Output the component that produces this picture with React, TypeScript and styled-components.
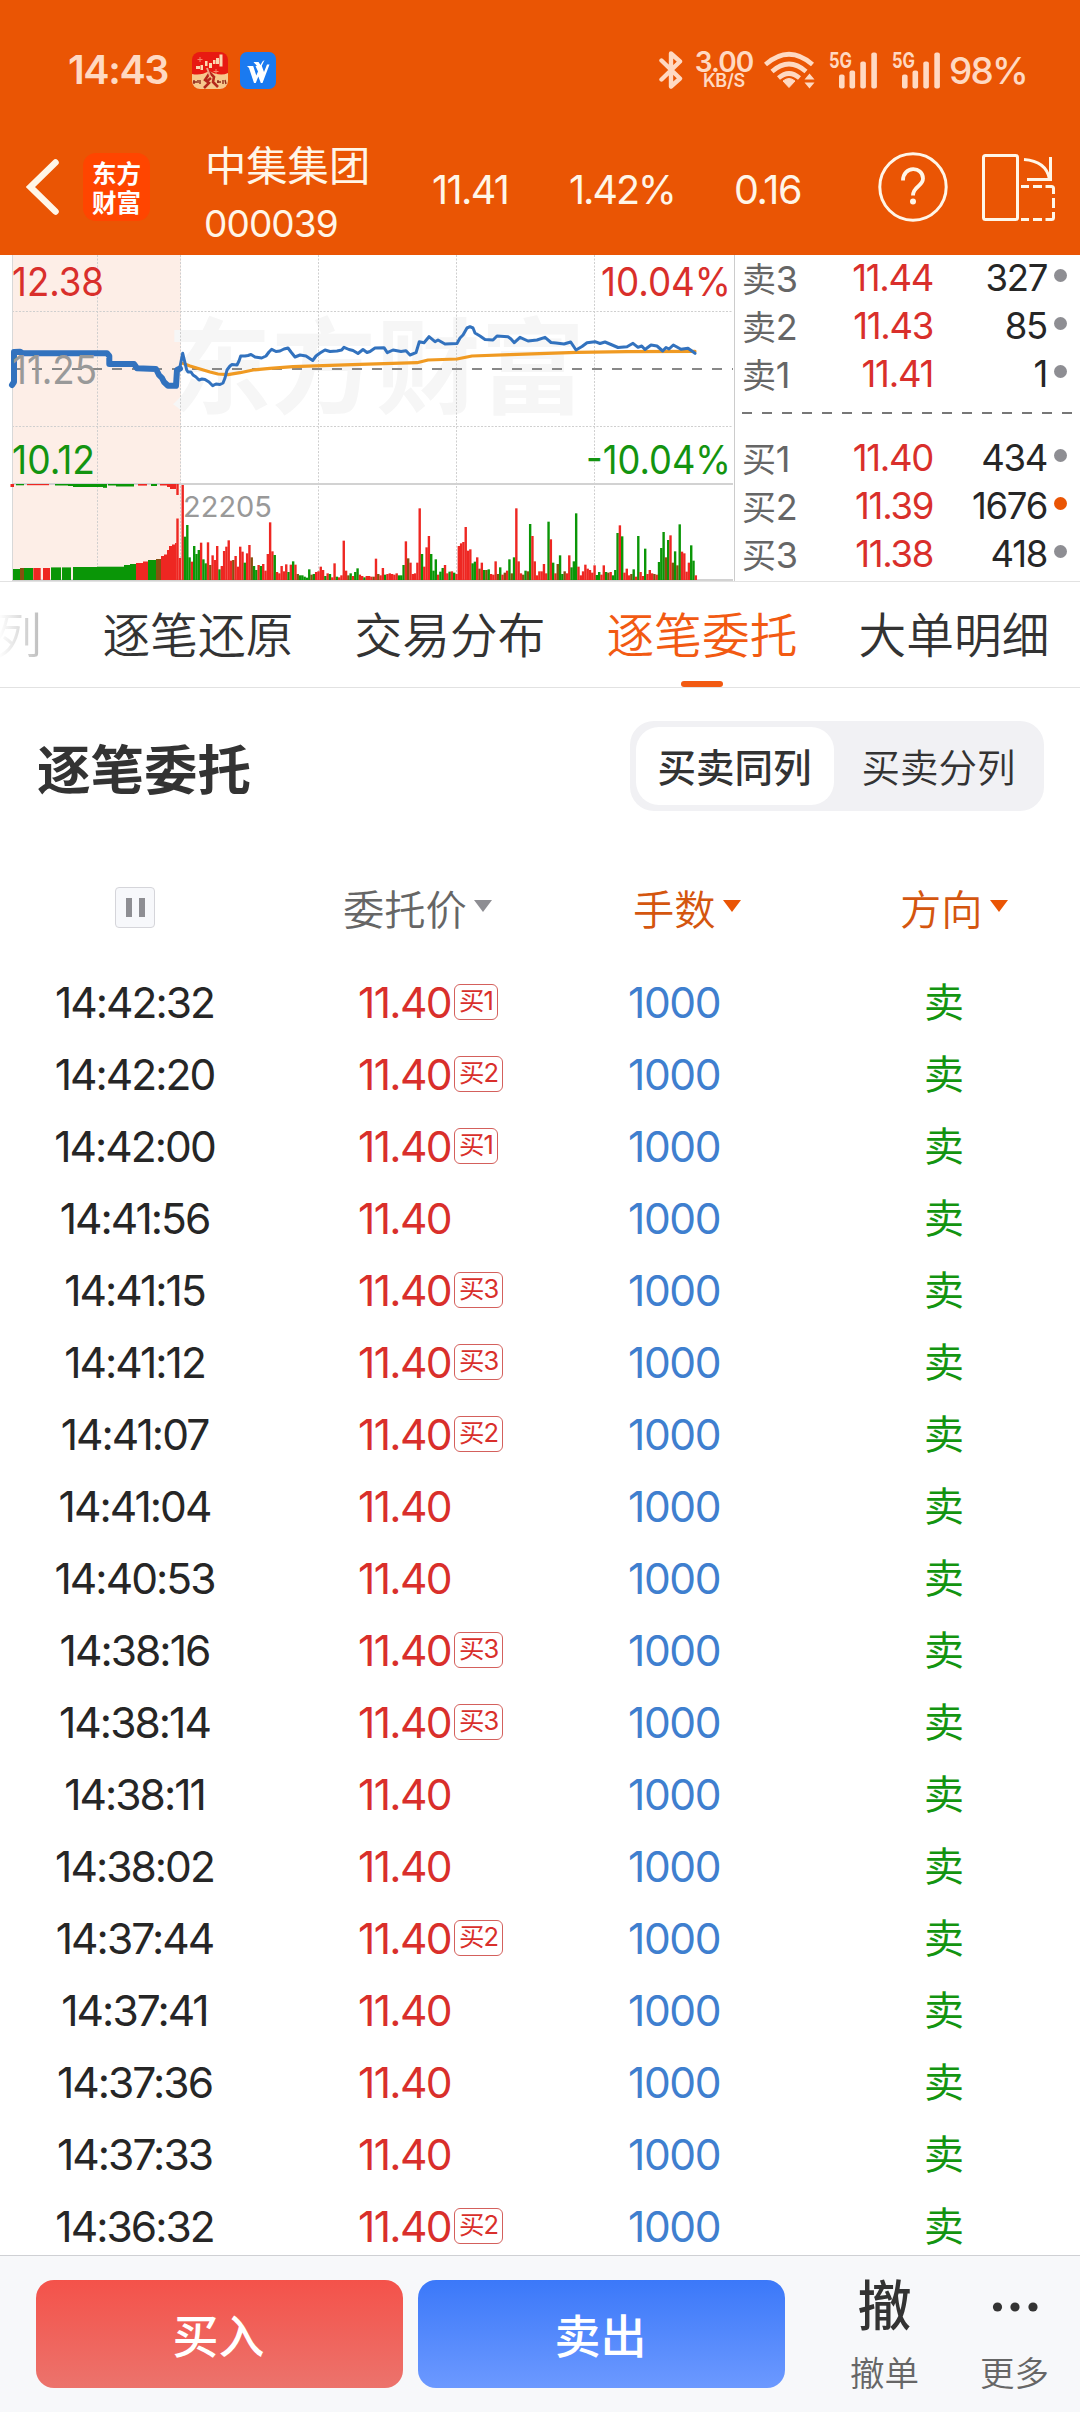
import React from "react";
import styled, { createGlobalStyle, css } from "styled-components";

const Global = createGlobalStyle`
  * { box-sizing: border-box; }
  body {
    margin: 0;
    background: #fff;
    font-family: Inter, "Noto Sans CJK SC", sans-serif;
  }
`;

const ORANGE = "#ea5504";
const RED = "#d92f2b";
const GREEN = "#139410";

/* ---------- data ---------- */

type Order = { time: string; tag?: string };

const orders: Order[] = [
  { time: "14:42:32", tag: "买1" },
  { time: "14:42:20", tag: "买2" },
  { time: "14:42:00", tag: "买1" },
  { time: "14:41:56" },
  { time: "14:41:15", tag: "买3" },
  { time: "14:41:12", tag: "买3" },
  { time: "14:41:07", tag: "买2" },
  { time: "14:41:04" },
  { time: "14:40:53" },
  { time: "14:38:16", tag: "买3" },
  { time: "14:38:14", tag: "买3" },
  { time: "14:38:11" },
  { time: "14:38:02" },
  { time: "14:37:44", tag: "买2" },
  { time: "14:37:41" },
  { time: "14:37:36" },
  { time: "14:37:33" },
  { time: "14:36:32", tag: "买2" },
];

type Quote = { label: string; price: string; volume: string; hot?: boolean };

const asks: Quote[] = [
  { label: "卖3", price: "11.44", volume: "327" },
  { label: "卖2", price: "11.43", volume: "85" },
  { label: "卖1", price: "11.41", volume: "1" },
];

const bids: Quote[] = [
  { label: "买1", price: "11.40", volume: "434" },
  { label: "买2", price: "11.39", volume: "1676", hot: true },
  { label: "买3", price: "11.38", volume: "418" },
];

/* One entry per minute: direction letter followed by the height in thirds of a pixel. */
const volumes = (
  "r285 g130 g165 g68 r55 g102 g78 g90 r112 g62 g50 r113 o45 r74 r60 r102 g32 r42 r87 r100 r119 r58 o60 r72 r40 r100 r85 g52 r80 r105 " +
  "o68 g42 g30 r45 g42 r48 r28 r78 r173 r86 g75 r24 r20 r42 r26 r47 g24 r46 g56 r46 o18 g14 g14 g10 g7 g32 o16 g18 r24 r26 " +
  "r40 r30 g12 r20 g18 r8 r50 g10 r8 r14 r118 r28 o14 g20 r12 g24 g35 r16 r12 g8 r12 r12 r10 o10 r64 o18 r14 r36 g16 r18 " +
  "r20 r18 r16 r20 g14 g14 g45 r116 o65 r52 r18 r20 r52 r215 g78 r40 r98 r132 g78 g28 g62 r16 g25 g36 r45 r20 g25 r26 g22 r18 " +
  "r102 r110 r114 r159 r88 r92 g50 g55 r68 o34 r52 g30 o30 g32 r18 r16 r56 o18 g38 r16 o22 r28 g62 o20 g68 r215 r56 r20 o16 g28 " +
  "o26 g168 r132 r56 r14 r26 r26 r48 r20 g175 r122 g52 r20 o48 g74 g18 o26 r20 r74 g38 g56 g200 r40 r14 r26 r46 r34 r30 r22 r44 " +
  "g15 g24 r16 r44 g24 o22 r24 g14 g30 g141 r164 g131 r22 r34 r14 o18 g32 r10 g132 r24 r12 g94 r18 r30 r20 o18 r16 g54 g96 g144 " +
  "o68 g120 r134 o52 g86 o44 g167 r85 r80 r25 r52 g104 g58 r14"
).split(" ");

const barColor: Record<string, string> = { r: "#ee2722", g: "#0a9607", o: "#86500f" };

/* Pre-open auction blocks: x, width, height, direction. */
const auction: [number, number, number, string][] = [
  [13, 7, 11, "g"], [20, 4, 12, "o"], [24, 9, 12, "g"], [33.3, 7.4, 12, "r"], [43, 7, 12, "r"],
  [51, 10, 12.6, "g"], [62, 9, 12.6, "g"], [73, 24, 13, "g"], [97, 27, 13.3, "g"], [124, 6, 15, "g"],
  [130, 6, 16, "g"], [136, 7, 17, "r"], [143, 5, 18.5, "r"], [148, 8, 20, "g"], [156, 5, 21, "o"],
  [161, 3, 24, "r"], [164, 3, 25.5, "r"], [167, 2, 30, "r"], [169, 3, 34, "r"], [172, 3, 35.5, "r"],
  [175, 1.6, 37, "r"], [176.3, 2.4, 61.5, "r"], [178.7, 2.4, 22, "r"],
];

const unmatched: [number, number, number, string][] = [
  [10.5, 3.5, 3, "r"], [16, 8, 1.3, "g"], [27, 22, 1.2, "r"], [55, 13, 1.5, "g"], [68, 5, 2, "g"],
  [73, 30, 3, "g"], [103, 4, 3.8, "g"], [108, 8, 1.5, "g"], [116, 18, 2.5, "g"], [138, 9, 1.6, "r"],
  [151, 6, 2, "g"], [160, 7, 1.5, "r"], [167, 3, 3, "r"], [170, 6, 5, "r"], [176.3, 2.4, 11, "r"],
];

const priceLine =
  "180,366.7 182.7,353.3 186.7,370 188,372 191,372 193,375 196,377 199,380 202,379 205,379.5 209,382 212.7,385.7 216,384 220,384.5 223,383 225,378 227,370 230,366 232,364.5 237,365 239,361 240.7,356 245,356 248,355.5 251,354.5 255,357 261.7,358 266,356 269,352 271.7,349.3 276,351.5 280,351 284,349 288,348 291,352 295,357 300,355 306,356 312.7,360.5 316,356 320,353 325,350 330,351.5 337,351 341.7,350 344,347.3 349,349.5 353,350.5 358,353.5 363,349.5 367,352.5 370,351.5 375,348 384,347.7 387.3,352.7 393,350 401,351.5 406,350.7 410,355 416,352.7 419.3,341.7 424,342.7 429,336.7 435,341.7 438,340 445,344 457,343.5 460,338 463,335 467,328 470,326.7 473,328 475,333 480,336 485,339.5 493,340 497,336 508,336.7 511,339 514.3,342.7 520,337.3 528,341 537,340 545,337.3 551,342.5 556,343 564,344 570.7,342 576,350 582,346.5 587,342.7 595,341.7 600,343.5 605,342 611,344.5 618,347.5 627,346.7 633,343.3 638,347.3 641.7,346 645,349.5 651,345 657,346 662.7,351 666,347.5 669,349 673.3,345 681,349.3 688,348.3 695,353.3";

const averageLine =
  "182.7,363.3 190,366 200,369 210,372 218,374 228,374.7 240,372.7 253,370 270,368.3 293,366.7 360,364.4 417,362.7 428,360 457,359 472,356 510,354.7 547,353.3 577,352.3 627,351.7 695,351.3";

const auctionLine =
  "12,385 14,382 14,352 20,351.7 23,353.3 107,353.3 109.3,356 109.3,364 134,364 137,368.3 156,369 159,375 162,378 164,382 168,385.7 176,385.7 177,370 180,368.5";

/* ---------- status bar ---------- */

const Screen = styled.div`
  width: 1080px;
  height: 2412px;
  display: flex;
  flex-direction: column;
  overflow: hidden;
  background: #fff;
  color: #262626;
  white-space: nowrap;
`;

const Head = styled.header`
  height: 255px;
  flex: none;
  background: ${ORANGE};
  color: #fff6e8;
  display: flex;
  flex-direction: column;
`;

const StatusBar = styled.div`
  height: 138px;
  flex: none;
  padding: 2px 54px 0 68px;
  display: flex;
  align-items: center;
  color: #ffd9c2;
`;

const Clock = styled.span`
  width: 124px;
  font-size: 39.5px;
  font-weight: 600;
  letter-spacing: -1.4px;
`;

const Tray = styled.div`
  display: flex;
  gap: 12px;
  flex: 1;
`;

const NetSpeed = styled.div`
  width: 60px;
  margin: 0 10px 0 11px;
  display: flex;
  flex-direction: column;
  align-items: center;
  font-weight: 600;
  font-size: 28px;
  line-height: 22px;
  letter-spacing: -0.9px;
  small {
    font-size: 18px;
    line-height: 16px;
    letter-spacing: -0.2px;
  }
`;

const Signals = styled.div`
  display: flex;
  gap: 14px;
  margin: 0 8px 0 13px;
  svg { overflow: visible; }
`;

const Battery = styled.span`
  width: 77px;
  font-size: 37px;
  font-weight: 500;
  letter-spacing: -1.8px;
`;

const Bluetooth = () => (
  <svg width="24" height="40" viewBox="0 0 24 40" fill="none" stroke="#ffd9c2" strokeWidth="4.4" strokeLinejoin="round" strokeLinecap="round">
    <path d="M2.5 10.5 21 28.500 12 36.500V3.500L21 11.500 2.500 29.500" />
  </svg>
);

const Wifi = () => (
  <svg width="52" height="40" viewBox="0 0 52 40">
    <g fill="none" stroke="#ffd9c2" strokeWidth="4.600">
      <path d="M1.500 14.500Q25 -6 48.500 14.500" />
      <path d="M8 21.500Q25 6.500 42 21.500" />
      <path d="M14.500 28Q25 19 35.500 28" />
    </g>
    <path d="M19 31Q25 26 31 31L25 37.500Z" fill="#ffd9c2" stroke="#ffd9c2" strokeWidth="1" />
    <path d="M40.500 29.500 45.500 23.500 50.500 29.500ZM40.500 32.500H50.500L45.500 38.500Z" fill="#ffd9c2" />
  </svg>
);

const Signal = () => (
  <svg width="49" height="40" viewBox="0 0 49 40" fill="#ffd9c2">
    <text x="0" y="17.500" fontSize="21" fontWeight="700" textLength="23" lengthAdjust="spacingAndGlyphs">5G</text>
    <rect x="10" y="24.500" width="5.600" height="14" rx="2" />
    <rect x="20.500" y="20.500" width="5.600" height="18" rx="2" />
    <rect x="31.300" y="11.500" width="5.600" height="27" rx="2" />
    <rect x="42.300" y="2.500" width="5.600" height="36" rx="2" />
  </svg>
);

const PromoApp = () => (
  <svg width="36" height="37" viewBox="0 0 36 37">
    <clipPath id="promo"><rect width="36" height="37" rx="8" /></clipPath>
    <g clipPath="url(#promo)">
      <rect width="36" height="37" fill="#e81a12" />
      <path d="M0 22Q9 24 17 19Q28 25 36 21V37H0Z" fill="#f7c98d" />
      <g fill="#fbd9b0">
        <rect x="4" y="14" width="4" height="3" /><rect x="8.500" y="13" width="2.500" height="5" />
        <rect x="13" y="9" width="2.500" height="5" /><rect x="17" y="11" width="3" height="5" />
        <rect x="21" y="8" width="2.500" height="4" /><rect x="24" y="6" width="3" height="6" />
        <rect x="27.500" y="2.500" width="3" height="12" />
      </g>
      <path d="M8 5v5M5.500 7.500h5M24 17v5M21.500 19.500h5" stroke="#f5876a" strokeWidth="1" />
      <path d="M15 17 18 21 22 25 21 30 26 35M17 22 13 28 17 31 12 36M19 26 14 30" stroke="#b5281c" strokeWidth="2.600" fill="none" />
      <path d="M15 16 18 24" stroke="#f3a183" strokeWidth="2" />
      <path d="M2 28v4M1 30h4M6 28v3M8 28v4M26 28v3M25 30h4M31 28v4M33 28l1 4" stroke="#8f2a1c" strokeWidth="1.400" />
    </g>
  </svg>
);

const WordApp = () => (
  <svg width="36" height="37" viewBox="0 0 36 37">
    <rect width="36" height="37" rx="7" fill="#1a7af0" />
    <g fill="#fff">
      <path d="M7 14H13.200L16.300 23.500 18 19.500 15.500 14H21.800L24 20 27 12.500H29.500L22.500 31H20.800L18.300 24.500 15.800 31H14L9 16Z" />
      <path d="M13.500 10H18.500L20.500 13 22.500 9.500 24.500 8 20 17.500Z" />
    </g>
  </svg>
);

/* ---------- title bar ---------- */

const TitleBar = styled.div`
  height: 117px;
  display: grid;
  grid-template-columns: 83px 122px 227px 137px 165px 144px 104px 1fr;
  grid-template-rows: 117px;
  align-items: center;
  > * { margin-bottom: 19px; }
  > svg:first-child { margin-left: 26px; }
`;

const Logo = styled.div`
  width: 67px;
  height: 68px;
  border-radius: 13px;
  background: #ff4500;
  color: #fff;
  font: 700 24.5px/29.500px "Noto Sans CJK SC", sans-serif;
  display: flex;
  flex-direction: column;
  align-items: center;
  justify-content: center;
`;

const StockName = styled.div`
  display: flex;
  flex-direction: column;
  font-size: 41.300px;
  line-height: 57px;
  && { margin: 0 0 3px; }
  span {
    font-size: 37px;
    letter-spacing: -0.9px;
    line-height: 57px;
    margin-left: -1px;
  }
`;

const HeadNumber = styled.span<{ $ls: number }>`
  font-size: 39.5px;
  letter-spacing: ${(p) => p.$ls}px;
  && { margin-top: 5px; }
`;

/* ---------- market panel ---------- */

const Market = styled.section`
  height: 327px;
  flex: none;
  display: flex;
  border-bottom: 1px solid #e2e2e2;
`;

const ChartBox = styled.div`
  width: 735px;
  border-right: 1px solid #ccc;
  svg { display: block; overflow: visible; }
`;

const Book = styled.div`
  flex: 1;
  padding: 0 13px 0 7px;
  margin-top: -2px;
`;

const BookRow = styled.div`
  height: 48px;
  display: grid;
  grid-template-columns: 90px 101px 114px 1fr;
  align-items: center;
  font-size: 36.5px;
  letter-spacing: -1.300px;
`;

const BookLabel = styled.span`
  color: #666;
  font-size: 34px;
  i { font-style: normal; font-size: 36px; margin-left: 1px; }
`;

const BookValue = styled.span<{ $color: string }>`
  text-align: right;
  color: ${(p) => p.$color};
`;

const Dot = styled.i<{ $hot?: boolean }>`
  width: 13px;
  height: 13px;
  border-radius: 50%;
  justify-self: end;
  margin-bottom: 5px;
  background: ${(p) => (p.$hot ? ORANGE : "#8e8e93")};
`;

const BookGap = styled.div`
  height: 36px;
  display: flex;
  align-items: center;
  padding-bottom: 5px;
  margin-right: -10px;
  &::before {
    content: "";
    height: 2px;
    flex: 1;
    background: repeating-linear-gradient(90deg, #777 0 10px, transparent 10px 20px);
  }
`;

/* ---------- tabs ---------- */

const Tabs = styled.nav`
  height: 106px;
  flex: none;
  display: flex;
  gap: 60px;
  padding-left: 102px;
  border-bottom: 1px solid #e2e2e2;
`;

const Tab = styled.a<{ $active?: boolean; $lead?: boolean }>`
  width: 192px;
  flex: none;
  display: flex;
  flex-direction: column;
  align-items: center;
  justify-content: space-between;
  font-size: 47.700px;
  line-height: 109px;
  font-weight: 350;
  color: #333;
  ${(p) => p.$lead && css`
    width: 48px;
    margin-left: -108px;
    background: linear-gradient(90deg, #fff 10%, #bbb);
    background-clip: text;
    color: transparent;
  `}
  ${(p) => p.$active && css`
    color: #f25a12;
    &::after {
      content: "";
      flex: none;
      width: 42px;
      height: 6px;
      margin-top: -10px;
      border-radius: 3px;
      background: #f25a12;
    }
  `}
`;

/* ---------- order list ---------- */

const ListHead = styled.div`
  height: 156px;
  flex: none;
  display: flex;
  align-items: center;
  justify-content: space-between;
  padding: 0 36px;
`;

const Heading = styled.h1`
  margin: 9px 0 0 1px;
  font-size: 53.500px;
  line-height: 80px;
  font-weight: 700;
  color: #333;
`;

const Segmented = styled.div`
  width: 414px;
  height: 90px;
  padding: 6px;
  border-radius: 24px;
  background: #f1f1f4;
  display: flex;
`;

const Segment = styled.button<{ $on?: boolean }>`
  width: ${(p) => (p.$on ? 198 : 204)}px;
  border: 0;
  padding: 0 ${(p) => (p.$on ? 1 : 0)}px 3px ${(p) => (p.$on ? 0 : 5)}px;
  border-radius: 23px;
  font: ${(p) => (p.$on ? 500 : 350)} 38.500px "Noto Sans CJK SC", sans-serif;
  color: #333;
  background: ${(p) => (p.$on ? "#fff" : "transparent")};
`;

const columns = css`
  display: grid;
  grid-template-columns: 270px 270px 268px 272px;
  align-items: center;
`;

const ColumnHead = styled.div`
  ${columns}
  height: 122px;
  flex: none;
  padding-top: 5px;
`;

const SortLabel = styled.span<{ $color: string; $tri: string; $left: number }>`
  display: flex;
  align-items: center;
  padding-left: ${(p) => p.$left}px;
  font-size: 41.300px;
  font-weight: 350;
  margin-top: -2px;
  color: ${(p) => p.$color};
  &::after {
    content: "";
    margin: 0 0 2px 7px;
    border: 9px solid transparent;
    border-top: 12px solid ${(p) => p.$tri};
    border-bottom: 0;
  }
`;

const PauseButton = styled.button`
  width: 40px;
  height: 41px;
  justify-self: center;
  padding: 0;
  display: flex;
  gap: 7px;
  align-items: center;
  justify-content: center;
  border: 1px solid #d5d5da;
  border-radius: 4px;
  background: #f7f8fb;
  &::before, &::after {
    content: "";
    width: 6px;
    height: 19px;
    background: #8e8e93;
  }
`;

const List = styled.div`
  flex: 1;
  min-height: 0;
  overflow: hidden;
`;

const Row = styled.div`
  ${columns}
  height: 72px;
  font-size: 42.500px;
  letter-spacing: -1.400px;
`;

const Time = styled.span`
  text-align: center;
  letter-spacing: -1.950px;
  padding-right: 1px;
`;

const Price = styled.span`
  display: flex;
  align-items: center;
  padding-left: 88px;
  color: ${RED};
  b {
    width: 96px;
    font-weight: 400;
    letter-spacing: -1.600px;
  }
`;

const Tag = styled.em`
  height: 36px;
  padding: 0 4px 3px;
  line-height: 32px;
  font-style: normal;
  font-size: 25.500px;
  letter-spacing: -0.900px;
  border: 1px solid #d4605c;
  border-radius: 6px;
`;

const Lots = styled.span`
  padding-left: 88px;
  color: #3f7fcf;
`;

const Side = styled.span`
  padding-left: 116px;
  font-size: 40px;
  margin-top: -5px;
  color: ${GREEN};
`;

/* ---------- action bar ---------- */

const ActionBar = styled.footer`
  height: 157px;
  flex: none;
  display: flex;
  padding: 24px 0 0 36px;
  background: #f7f8fa;
  border-top: 1px solid #cfd0d4;
`;

const TradeButton = styled.button<{ $from: string; $to: string }>`
  width: 367px;
  height: 108px;
  margin-right: 15px;
  padding: 0 2px 3px 0;
  border: 0;
  border-radius: 18px;
  color: #fff;
  font: 500 46px "Noto Sans CJK SC", sans-serif;
  background: linear-gradient(${(p) => p.$from}, ${(p) => p.$to});
`;

const Action = styled.div<{ $w: number }>`
  width: ${(p) => p.$w}px;
  display: flex;
  flex-direction: column;
  align-items: center;
  color: #333;
  font-size: 54px;
  font-weight: 500;
  line-height: 54px;
  > svg { height: 54px; }
  span {
    margin-top: 13px;
    font-size: 34.500px;
    font-weight: 350;
    color: #666;
  }
`;

/* ---------- drawings ---------- */

const Bars = ({ blocks, from }: { blocks: [number, number, number, string][]; from: "top" | "bottom" }) => (
  <>
    {blocks.map(([x, w, h, c], i) => (
      <rect key={i} x={x} y={from === "top" ? 229 : 325 - h} width={w} height={h} fill={barColor[c]} />
    ))}
  </>
);

const ChartText = ({ x, y, w, size = 39, fill, children }: { x: number; y: number; w: number; size?: number; fill: string; children: string }) => (
  <text x={x} y={y} fontSize={size} fill={fill} textLength={w} lengthAdjust="spacingAndGlyphs">{children}</text>
);

const Chart = () => (
  <svg width="734" height="326" viewBox="0 0 734 326">
    <rect x="12" width="169" height="325" fill="#fdeee7" />
    <text x="167" y="151" fontSize="104" fontWeight="700" fill="#f6f6f6" textLength="418" lengthAdjust="spacingAndGlyphs">东方财富</text>
    <g stroke="#cfcfcf" strokeWidth="1" strokeDasharray="2 1.500" fill="none">
      <path d="M97.500 0V325M180.500 0V325M318.500 0V325M456.500 0V325M594.500 0V325" />
      <path d="M12 56.500H733M12 171.500H733" />
    </g>
    <path d="M12.500 0V325" stroke="#d8d8d8" />
    <path d="M12 229H733" stroke="#d2d2d2" strokeWidth="2" />
    <path d="M12 325H733" stroke="#d2d2d2" strokeWidth="2" />
    <path d="M12 114H733" stroke="#888" strokeWidth="2" strokeDasharray="10 10" />
    <Bars blocks={auction} from="bottom" />
    <Bars blocks={unmatched} from="top" />
    {volumes.map((v, i) => {
      const h = Number(v.slice(1)) / 3;
      return <rect key={i} x={181.500 + i * 2.301} y={325 - h} width="2.400" height={h} fill={barColor[v[0]]} />;
    })}
    <g transform="translate(0 -255)" fill="none" strokeLinejoin="round" strokeLinecap="round">
      <polyline points={averageLine} stroke="#f09a22" strokeWidth="3.200" />
      <polyline points={auctionLine} stroke="#3272be" strokeWidth="6" />
      <polyline points={priceLine} stroke="#3272be" strokeWidth="3" />
    </g>
    <ChartText x={12} y={40.500} w={92} fill={RED}>12.38</ChartText>
    <ChartText x={12} y={129} w={85} fill="#999">11.25</ChartText>
    <ChartText x={12} y={218.500} w={83} fill={GREEN}>10.12</ChartText>
    <ChartText x={601} y={40.500} w={130} fill={RED}>10.04%</ChartText>
    <ChartText x={586} y={218.500} w={145} fill={GREEN}>-10.04%</ChartText>
    <ChartText x={183} y={261.500} w={89} size={29} fill="#999">22205</ChartText>
  </svg>
);

const BackIcon = () => (
  <svg width="34" height="58" viewBox="0 0 34 58" fill="none" stroke="#fff6e8" strokeWidth="6.500" strokeLinecap="round">
    <path d="M29.500 4.500 4.500 29 29.500 53.500" />
  </svg>
);

const HelpIcon = () => (
  <svg width="70" height="70" viewBox="0 0 70 70" fill="none" stroke="#fff6e8" strokeWidth="3">
    <circle cx="35" cy="35" r="33.200" />
    <path d="M25 28.500C25 13.500 45 14 45 26.500C45 34.500 35 34 35 43.500" strokeWidth="3.800" />
    <circle cx="35" cy="49.500" r="3" fill="#fff6e8" stroke="none" />
  </svg>
);

const RotateIcon = () => (
  <svg width="74" height="70" viewBox="0 0 74 70" fill="none" stroke="#fff6e8" strokeWidth="3">
    <rect x="1.500" y="3.500" width="34" height="64" rx="2" />
    <path d="M42 7.500Q64 9 67.500 27M68.500 5V27.500H45" />
    <path d="M39 34.500H47M51 34.500H60M63.500 34.500H69.500Q71.500 34.500 71.500 36.500V42M71.500 46V56M71.500 60V65.500Q71.500 67.500 69.500 67.500H63.500M60 67.500H51M47 67.500H39" />
  </svg>
);

const BookLine = ({ q }: { q: Quote }) => (
  <BookRow>
    <BookLabel>{q.label[0]}<i>{q.label[1]}</i></BookLabel>
    <BookValue $color={RED}>{q.price}</BookValue>
    <BookValue $color="#262626">{q.volume}</BookValue>
    <Dot $hot={q.hot} />
  </BookRow>
);

export default function App() {
  return (
    <Screen>
      <Global />
      <Head>
        <StatusBar>
          <Clock>14:43</Clock>
          <Tray><PromoApp /><WordApp /></Tray>
          <Bluetooth />
          <NetSpeed>3.00<small>KB/S</small></NetSpeed>
          <Wifi />
          <Signals><Signal /><Signal /></Signals>
          <Battery>98%</Battery>
        </StatusBar>
        <TitleBar>
          <BackIcon />
          <Logo><span>东方</span><span>财富</span></Logo>
          <StockName>中集集团<span>000039</span></StockName>
          <HeadNumber $ls={-1.600}>11.41</HeadNumber>
          <HeadNumber $ls={-2}>1.42%</HeadNumber>
          <HeadNumber $ls={-1.300}>0.16</HeadNumber>
          <HelpIcon />
          <RotateIcon />
        </TitleBar>
      </Head>

      <Market>
        <ChartBox><Chart /></ChartBox>
        <Book>
          {asks.map((q) => <BookLine key={q.label} q={q} />)}
          <BookGap />
          {bids.map((q) => <BookLine key={q.label} q={q} />)}
        </Book>
      </Market>

      <Tabs>
        <Tab $lead>列</Tab>
        <Tab>逐笔还原</Tab>
        <Tab>交易分布</Tab>
        <Tab $active>逐笔委托</Tab>
        <Tab>大单明细</Tab>
      </Tabs>

      <ListHead>
        <Heading>逐笔委托</Heading>
        <Segmented>
          <Segment $on>买卖同列</Segment>
          <Segment>买卖分列</Segment>
        </Segmented>
      </ListHead>

      <ColumnHead>
        <PauseButton aria-label="暂停" />
        <SortLabel $color="#666" $tri="#8e8e93" $left={73}>委托价</SortLabel>
        <SortLabel $color="#d4560f" $tri={ORANGE} $left={93}>手数</SortLabel>
        <SortLabel $color="#d4560f" $tri={ORANGE} $left={92}>方向</SortLabel>
      </ColumnHead>

      <List>
        {orders.map((o) => (
          <Row key={o.time}>
            <Time>{o.time}</Time>
            <Price><b>11.40</b>{o.tag && <Tag>{o.tag}</Tag>}</Price>
            <Lots>1000</Lots>
            <Side>卖</Side>
          </Row>
        ))}
      </List>

      <ActionBar>
        <TradeButton $from="#f4524a" $to="#ec736c">买入</TradeButton>
        <TradeButton $from="#3b78f9" $to="#6c99ff">卖出</TradeButton>
        <Action $w={169}>撤<span>撤单</span></Action>
        <Action $w={91}>
          <svg width="46" viewBox="0 0 46 54" fill="#333">
            <circle cx="5.500" cy="27" r="4.600" /><circle cx="23" cy="27" r="4.600" /><circle cx="41" cy="27" r="4.600" />
          </svg>
          <span>更多</span>
        </Action>
      </ActionBar>
    </Screen>
  );
}
